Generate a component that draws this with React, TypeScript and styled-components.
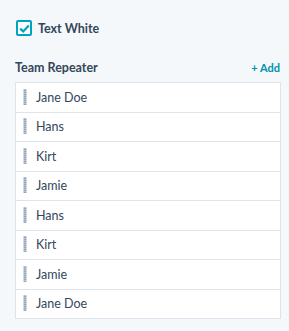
import React from "react";
import styled, { createGlobalStyle } from "styled-components";

const GlobalStyle = createGlobalStyle`
  html, body {
    margin: 0;
    padding: 0;
    background: #f5f8fa;
    font-family: Lato, "Liberation Sans", sans-serif;
    color: #33475b;
  }
`;

const Page = styled.div`
  width: 289px;
  height: 331px;
  box-sizing: border-box;
  padding: 20px 8px 0 15px;
`;

const CheckRow = styled.label`
  display: flex;
  align-items: center;
  gap: 6px;
  padding-left: 1px;
  height: 16px;
`;

const Box = styled.span`
  width: 16px;
  height: 16px;
  box-sizing: border-box;
  border: 2px solid #00a4bd;
  border-radius: 2px;
  background: #fff;
  display: flex;
  align-items: center;
  justify-content: center;
`;

const CheckText = styled.span`
  font-size: 12.5px;
  font-weight: 700;
`;

const Header = styled.div`
  display: flex;
  justify-content: space-between;
  align-items: baseline;
  margin-top: 24px;
  margin-right: 1px;
`;

const Title = styled.span`
  font-size: 12.5px;
  font-weight: 700;
`;

const AddLink = styled.span`
  font-size: 11px;
  font-weight: 700;
  color: #0091ae;
`;

const List = styled.div`
  margin-top: 7px;
  width: 266px;
  box-sizing: border-box;
  border: 1px solid #dfe3eb;
  background: #fff;
`;

const Item = styled.div<{ $last?: boolean }>`
  height: 28.5px;
  display: flex;
  align-items: center;
  gap: 9px;
  padding-left: 7px;
  font-size: 12.5px;
  border-bottom: ${(p) => (p.$last ? "none" : "1px solid #dfe3eb")};
`;

const Grip = () => (
  <svg width="4" height="17" viewBox="0 0 4 17">
    {[0, 1, 2, 3, 4, 5, 6, 7].map((i) => (
      <rect key={i} x="0.5" y={i * 2 + 0.5} width="3" height="1.2" fill="#6b84a0" />
    ))}
  </svg>
);

const names = ["Jane Doe", "Hans", "Kirt", "Jamie", "Hans", "Kirt", "Jamie", "Jane Doe"];

export default function App() {
  return (
    <Page>
      <GlobalStyle />
      <CheckRow>
        <Box>
          <svg width="11" height="9" viewBox="0 0 11 9">
            <path d="M1.2 4.6 L4.2 7.4 L9.8 1.4" fill="none" stroke="#00a4bd" strokeWidth="2.2" />
          </svg>
        </Box>
        <CheckText>Text White</CheckText>
      </CheckRow>
      <Header>
        <Title>Team Repeater</Title>
        <AddLink>+ Add</AddLink>
      </Header>
      <List>
        {names.map((n, i) => (
          <Item key={i} $last={i === names.length - 1}>
            <Grip />
            {n}
          </Item>
        ))}
      </List>
    </Page>
  );
}
